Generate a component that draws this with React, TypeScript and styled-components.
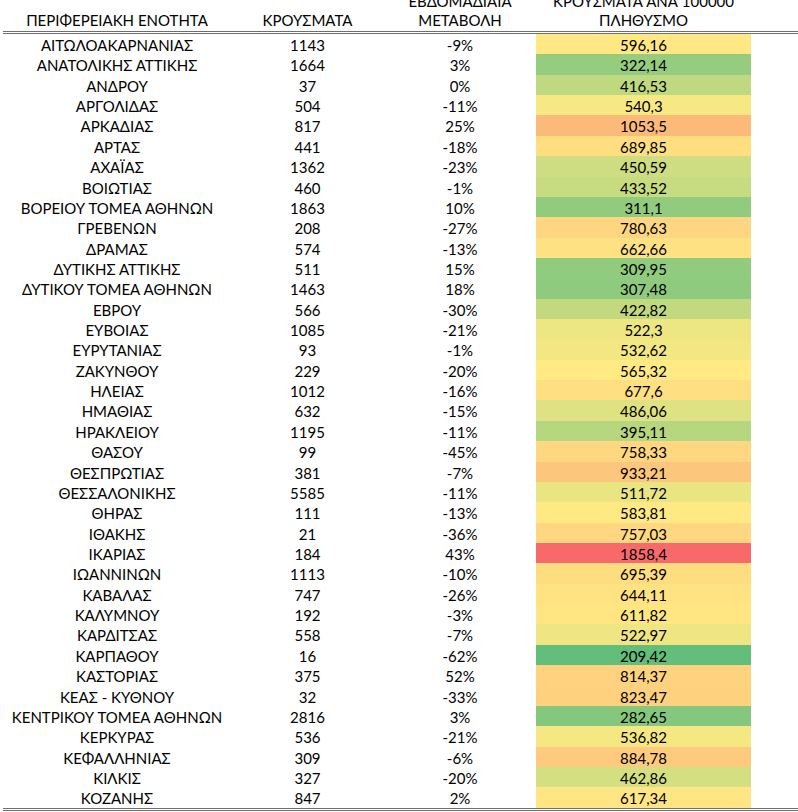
import React from "react";
import styled, { createGlobalStyle } from "styled-components";

const Global = createGlobalStyle`
  html, body { margin: 0; padding: 0; background: #ffffff; }
  body { overflow: hidden; width: 798px; height: 812px; }
`;

type Row = [string, number, string, string];

const rows: Row[] = [
  ["ΑΙΤΩΛΟΑΚΑΡΝΑΝΙΑΣ", 1143, "-9%", "596,16"],
  ["ΑΝΑΤΟΛΙΚΗΣ ΑΤΤΙΚΗΣ", 1664, "3%", "322,14"],
  ["ΑΝΔΡΟΥ", 37, "0%", "416,53"],
  ["ΑΡΓΟΛΙΔΑΣ", 504, "-11%", "540,3"],
  ["ΑΡΚΑΔΙΑΣ", 817, "25%", "1053,5"],
  ["ΑΡΤΑΣ", 441, "-18%", "689,85"],
  ["ΑΧΑΪΑΣ", 1362, "-23%", "450,59"],
  ["ΒΟΙΩΤΙΑΣ", 460, "-1%", "433,52"],
  ["ΒΟΡΕΙΟΥ ΤΟΜΕΑ ΑΘΗΝΩΝ", 1863, "10%", "311,1"],
  ["ΓΡΕΒΕΝΩΝ", 208, "-27%", "780,63"],
  ["ΔΡΑΜΑΣ", 574, "-13%", "662,66"],
  ["ΔΥΤΙΚΗΣ ΑΤΤΙΚΗΣ", 511, "15%", "309,95"],
  ["ΔΥΤΙΚΟΥ ΤΟΜΕΑ ΑΘΗΝΩΝ", 1463, "18%", "307,48"],
  ["ΕΒΡΟΥ", 566, "-30%", "422,82"],
  ["ΕΥΒΟΙΑΣ", 1085, "-21%", "522,3"],
  ["ΕΥΡΥΤΑΝΙΑΣ", 93, "-1%", "532,62"],
  ["ΖΑΚΥΝΘΟΥ", 229, "-20%", "565,32"],
  ["ΗΛΕΙΑΣ", 1012, "-16%", "677,6"],
  ["ΗΜΑΘΙΑΣ", 632, "-15%", "486,06"],
  ["ΗΡΑΚΛΕΙΟΥ", 1195, "-11%", "395,11"],
  ["ΘΑΣΟΥ", 99, "-45%", "758,33"],
  ["ΘΕΣΠΡΩΤΙΑΣ", 381, "-7%", "933,21"],
  ["ΘΕΣΣΑΛΟΝΙΚΗΣ", 5585, "-11%", "511,72"],
  ["ΘΗΡΑΣ", 111, "-13%", "583,81"],
  ["ΙΘΑΚΗΣ", 21, "-36%", "757,03"],
  ["ΙΚΑΡΙΑΣ", 184, "43%", "1858,4"],
  ["ΙΩΑΝΝΙΝΩΝ", 1113, "-10%", "695,39"],
  ["ΚΑΒΑΛΑΣ", 747, "-26%", "644,11"],
  ["ΚΑΛΥΜΝΟΥ", 192, "-3%", "611,82"],
  ["ΚΑΡΔΙΤΣΑΣ", 558, "-7%", "522,97"],
  ["ΚΑΡΠΑΘΟΥ", 16, "-62%", "209,42"],
  ["ΚΑΣΤΟΡΙΑΣ", 375, "52%", "814,37"],
  ["ΚΕΑΣ - ΚΥΘΝΟΥ", 32, "-33%", "823,47"],
  ["ΚΕΝΤΡΙΚΟΥ ΤΟΜΕΑ ΑΘΗΝΩΝ", 2816, "3%", "282,65"],
  ["ΚΕΡΚΥΡΑΣ", 536, "-21%", "536,82"],
  ["ΚΕΦΑΛΛΗΝΙΑΣ", 309, "-6%", "884,78"],
  ["ΚΙΛΚΙΣ", 327, "-20%", "462,86"],
  ["ΚΟΖΑΝΗΣ", 847, "2%", "617,34"],
];

const MIN = 209.42;
const MID = 560;
const MAX = 1858.4;
const G = [99, 190, 123];
const Y = [255, 235, 132];
const R = [248, 105, 107];

function scale(v: number): string {
  let a = G, b = Y, t = 0;
  if (v <= MID) {
    t = Math.max(0, (v - MIN) / (MID - MIN));
  } else {
    a = Y; b = R;
    t = Math.min(1, (v - MID) / (MAX - MID));
  }
  const c = a.map((x, i) => Math.round(x + (b[i] - x) * t));
  return `rgb(${c[0]}, ${c[1]}, ${c[2]})`;
}

const Sheet = styled.div`
  padding-left: 3px;
  margin-top: -8px;
  font-family: Lato, "Liberation Sans", "DejaVu Sans", sans-serif;
  font-size: 15px;
  color: #000;
`;

const Grid = styled.div`
  display: grid;
  grid-template-columns: 228px 153px 152px 215px 1fr;
`;

const HeadRow = styled(Grid)`
  height: 39px;
  border-bottom: 3px double #6f6f6f;
`;

const HeadCell = styled.div`
  display: flex;
  align-items: flex-end;
  justify-content: center;
  text-align: center;
  line-height: 18.5px;
  padding-bottom: 2px;
`;

const Body = styled.div`
  border-bottom: 3px double #6f6f6f;
`;

const DataRow = styled(Grid)`
  height: 20.37px;
`;

const Cell = styled.div<{ $bg?: string }>`
  display: flex;
  align-items: center;
  justify-content: center;
  line-height: 20px;
  padding-top: 1px;
  white-space: nowrap;
  background: ${(p) => p.$bg ?? "transparent"};
`;

export default function App() {
  return (
    <>
      <Global />
      <Sheet>
        <HeadRow>
          <HeadCell>ΠΕΡΙΦΕΡΕΙΑΚΗ ΕΝΟΤΗΤΑ</HeadCell>
          <HeadCell>ΚΡΟΥΣΜΑΤΑ</HeadCell>
          <HeadCell>
            ΕΒΔΟΜΑΔΙΑΙΑ
            <br />
            ΜΕΤΑΒΟΛΗ
          </HeadCell>
          <HeadCell>
            ΚΡΟΥΣΜΑΤΑ ΑΝΑ 100000
            <br />
            ΠΛΗΘΥΣΜΟ
          </HeadCell>
          <HeadCell />
        </HeadRow>
        <Body>
          {rows.map(([name, cases, change, rate]) => (
            <DataRow key={name}>
              <Cell>{name}</Cell>
              <Cell>{cases}</Cell>
              <Cell>{change}</Cell>
              <Cell $bg={scale(parseFloat(rate.replace(",", ".")))}>{rate}</Cell>
              <Cell />
            </DataRow>
          ))}
        </Body>
      </Sheet>
    </>
  );
}
